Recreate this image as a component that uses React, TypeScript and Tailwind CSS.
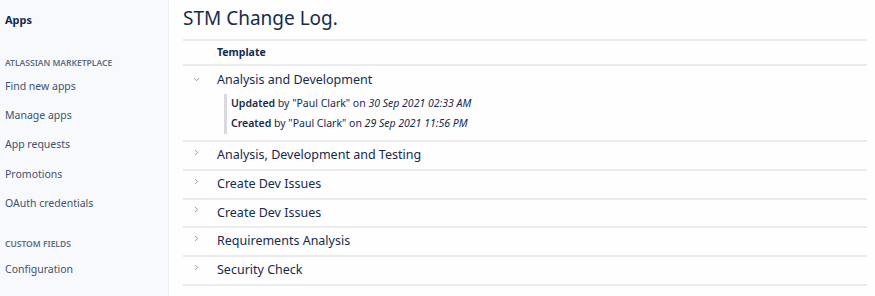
import { ChevronDown, ChevronRight } from 'lucide-react';

const rows = [
  'Analysis, Development and Testing',
  'Create Dev Issues',
  'Create Dev Issues',
  'Requirements Analysis',
  'Security Check',
];

function NavItem({ label }: { label: string }) {
  return <div className="h-[29.25px] flex items-center text-[10.5px] text-[#42526e]">{label}</div>;
}

export default function App() {
  return (
    <div className="flex w-[875px] h-[296px] overflow-hidden bg-[#fdfefd] text-[#172b4d] font-['Noto_Sans',sans-serif]">
      {/* Sidebar */}
      <aside className="w-[169px] shrink-0 bg-[#f7f9fc] border-r border-[#eef0f3] pl-[5px]">
        <div className="h-[40px] flex items-center text-[11px] font-bold text-[#172b4d]">Apps</div>
        <div className="mt-[15px] h-[16px] flex items-center text-[8.5px] font-semibold uppercase text-[#5e6c84]">
          Atlassian Marketplace
        </div>
        <div className="mt-[1px]">
          <NavItem label="Find new apps" />
          <NavItem label="Manage apps" />
          <NavItem label="App requests" />
          <NavItem label="Promotions" />
          <NavItem label="OAuth credentials" />
        </div>
        <div className="mt-[18px] h-[16px] flex items-center text-[8.5px] font-semibold uppercase text-[#5e6c84]">
          Custom Fields
        </div>
        <div className="mt-[3px]">
          <NavItem label="Configuration" />
          <div className="mt-[4px]">
            <NavItem label="Global Field Context" />
          </div>
        </div>
      </aside>

      {/* Main */}
      <main className="flex-1 pl-[14px] pr-[8px]">
        <h1 className="h-[39px] flex items-center text-[19px] leading-none pb-[2px]">STM Change Log.</h1>
        <div className="border-t-2 border-[#ebecf0]">
          <div className="h-[25px] flex items-center pl-[34px] text-[10.5px] font-bold border-b-2 border-[#ebecf0]">
            Template
          </div>

          <div className="border-b-2 border-[#ebecf0] pb-[6px]">
            <div className="h-[28px] flex items-center">
              <span className="w-[34px] pl-[9px] flex">
                <ChevronDown className="size-[9px] text-[#6b778c] -mt-[2px]" strokeWidth={2} />
              </span>
              <span className="text-[12.5px]">Analysis and Development</span>
            </div>
            <div className="pl-[41px] text-[10.5px] text-[#172b4d]">
              <div className="h-[20px] flex items-center border-l-[3px] border-[#d8dadf] pl-[4px]">
                <span>
                  <b className="font-semibold">Updated</b> by "Paul Clark" on <i>30 Sep 2021 02:33 AM</i>
                </span>
              </div>
              <div className="h-[20px] flex items-center border-l-[3px] border-[#d8dadf] pl-[4px]">
                <span>
                  <b className="font-semibold">Created</b> by "Paul Clark" on <i>29 Sep 2021 11:56 PM</i>
                </span>
              </div>
            </div>
          </div>

          {rows.map((r, i) => (
            <div key={i} className="h-[28.8px] flex items-center border-b-2 border-[#ebecf0]">
              <span className="w-[34px] pl-[9px] flex">
                <ChevronRight className="size-[9px] text-[#6b778c] -mt-[6px]" strokeWidth={2} />
              </span>
              <span className="text-[12.5px]">{r}</span>
            </div>
          ))}
        </div>
      </main>
    </div>
  );
}
